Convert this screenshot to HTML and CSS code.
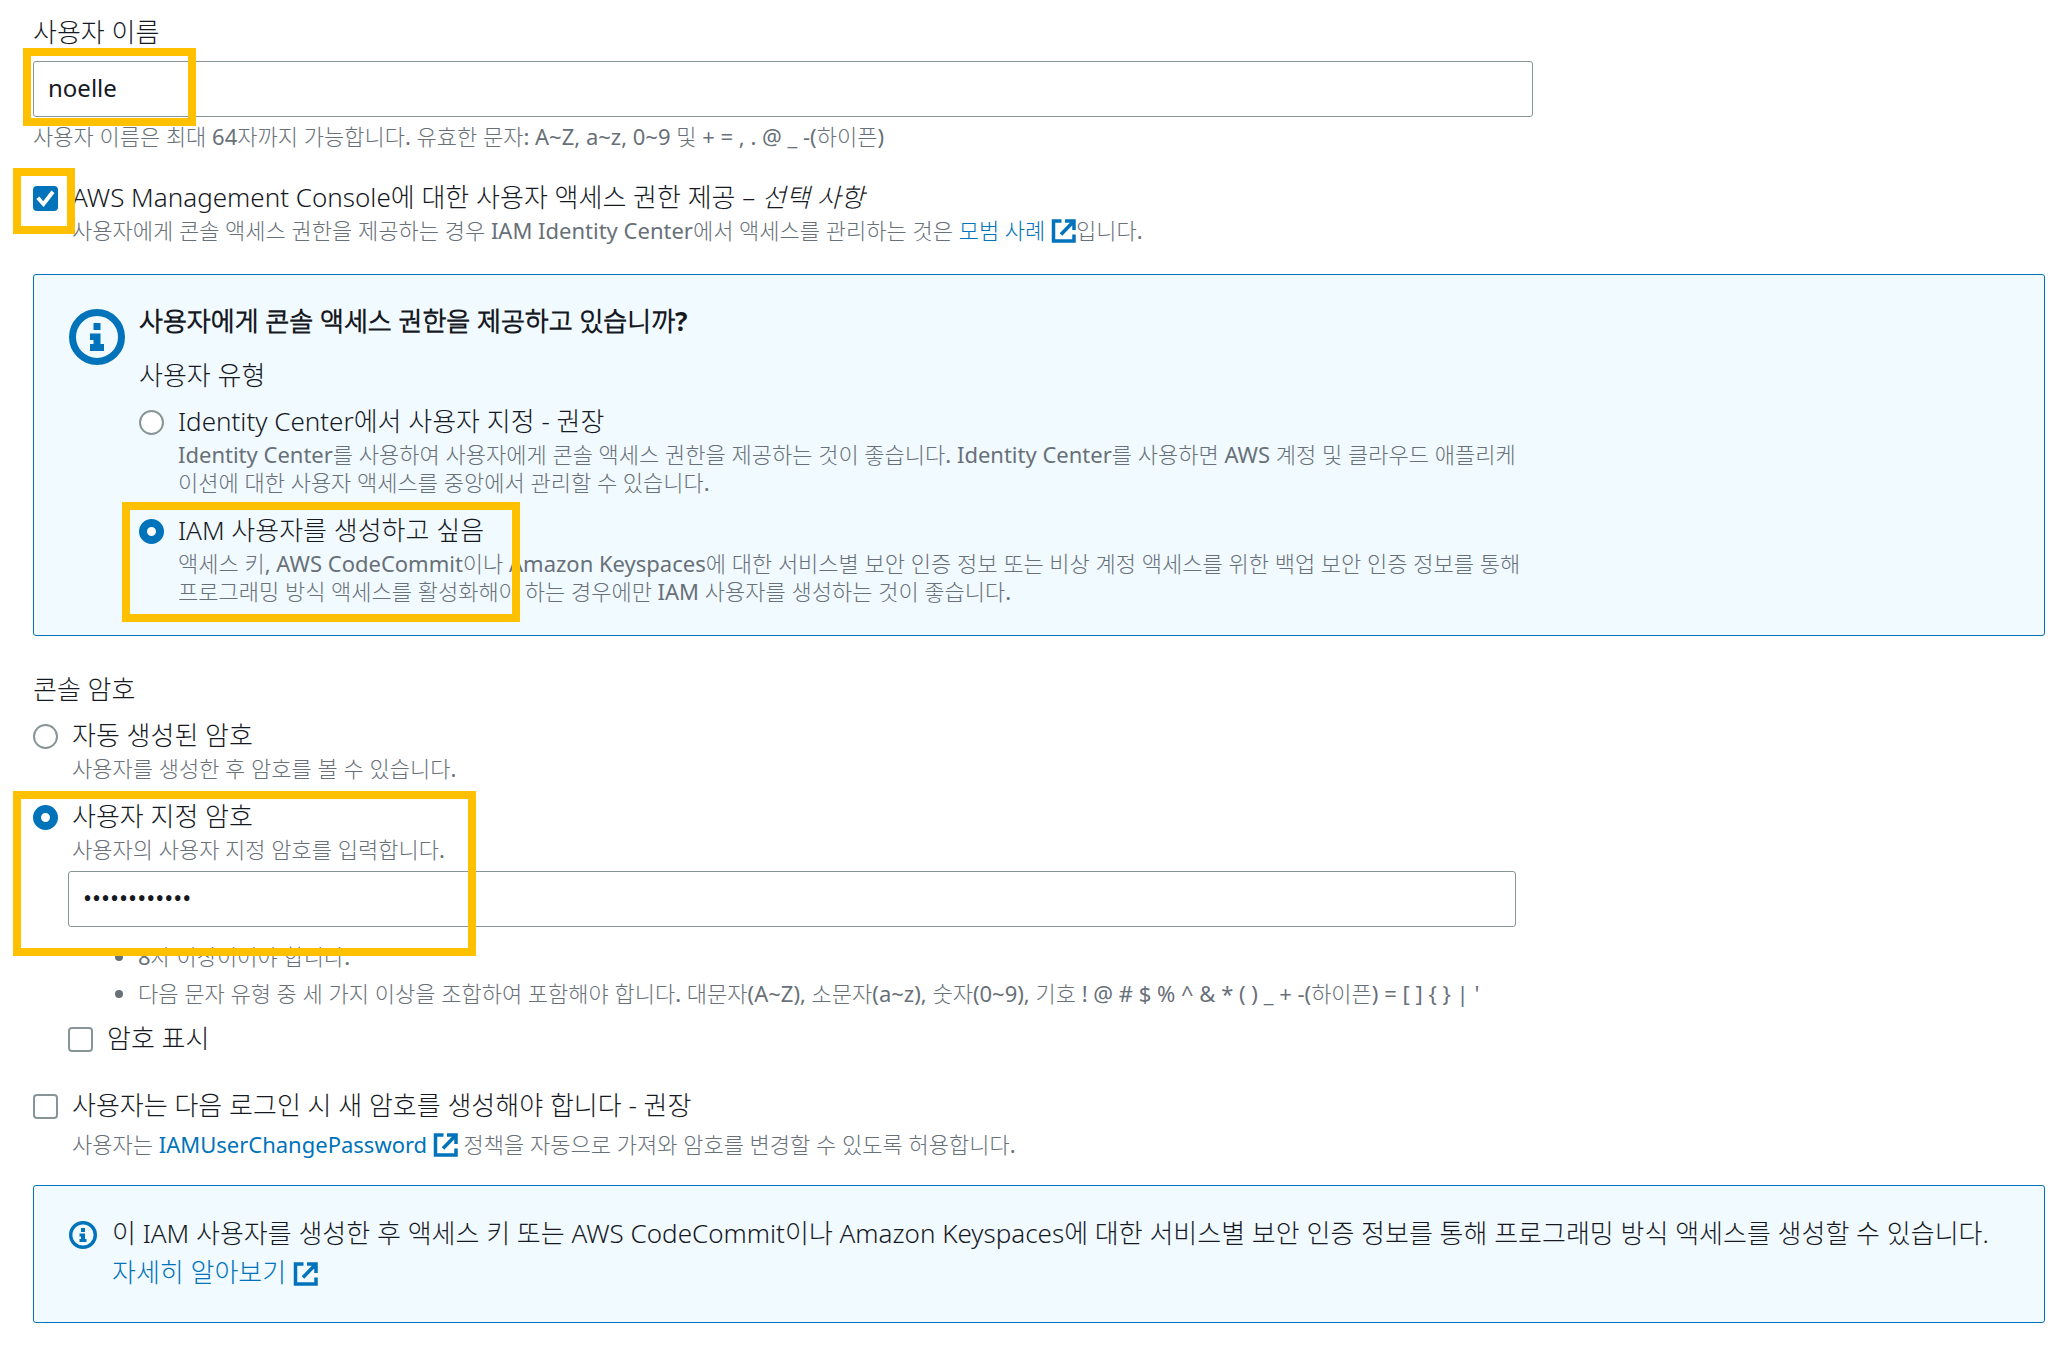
FILE: index.html
```html
<!DOCTYPE html>
<html lang="ko">
<head>
    <meta charset="UTF-8">
    <title>사용자 생성</title>
    <link rel="stylesheet" href="styles.css">
</head>
<body>
    <svg class="sprite" aria-hidden="true">
        <symbol id="external" viewBox="0 0 24 24">
            <path d="M10 2H2v20h20.500V15.500M13.500 2h9v9M22 2.500 9.500 15.500" fill="none" stroke="currentColor" stroke-width="3.500"/>
        </symbol>
        <symbol id="info" viewBox="0 0 56 56">
            <circle cx="28" cy="28" r="24.500" fill="none" stroke="currentColor" stroke-width="7"/>
            <path d="M24.500 14h7v7h-7zM21 24.500h10.500V35H35v7H21v-7h3.500v-4H21z" fill="currentColor"/>
        </symbol>
        <symbol id="info-small" viewBox="0 0 28 28">
            <circle cx="14" cy="14" r="12.300" fill="none" stroke="currentColor" stroke-width="3.400"/>
            <path d="M12 7h4v4h-4zM10.500 12.500H16V18h1.500v3h-7v-3H12v-2.500h-1.500z" fill="currentColor"/>
        </symbol>
    </svg>

    <form class="page">
        <div class="field">
            <label class="label" for="username">사용자 이름</label>
            <div class="marked">
                <input class="text-input" type="text" id="username" name="username" value="noelle">
                <span class="mark mark-name"></span>
            </div>
            <p class="desc hint">사용자 이름은 최대 64자까지 가능합니다. 유효한 문자: A~Z, a~z, 0~9 및 + = , . @ _ -(하이픈)</p>
        </div>

        <div class="choice console-access">
            <input type="checkbox" id="console" checked>
            <div>
                <label class="label" for="console">AWS Management Console에 대한 사용자 액세스 권한 제공 – <em>선택 사항</em></label>
                <p class="desc">사용자에게 콘솔 액세스 권한을 제공하는 경우 IAM Identity Center에서 액세스를 관리하는 것은 <a href="#">모범 사례 <svg class="external"><use href="#external"/></svg></a>입니다.</p>
            </div>
            <span class="mark mark-check"></span>
        </div>

        <section class="alert">
            <svg class="icon-big"><use href="#info"/></svg>
            <div class="alert-body">
                <h2>사용자에게 콘솔 액세스 권한을 제공하고 있습니까?</h2>
                <fieldset class="user-type">
                    <legend class="label">사용자 유형</legend>
                    <div class="choices">
                        <div class="choice">
                            <input type="radio" id="type-center" name="type">
                            <div>
                                <label class="label" for="type-center">Identity Center에서 사용자 지정 - 권장</label>
                                <p class="desc">Identity Center를 사용하여 사용자에게 콘솔 액세스 권한을 제공하는 것이 좋습니다. Identity Center를 사용하면 AWS 계정 및 클라우드 애플리케이션에 대한 사용자 액세스를 중앙에서 관리할 수 있습니다.</p>
                            </div>
                        </div>
                        <div class="choice">
                            <input type="radio" id="type-iam" name="type" checked>
                            <div>
                                <label class="label" for="type-iam">IAM 사용자를 생성하고 싶음</label>
                                <p class="desc">액세스 키, AWS CodeCommit이나 Amazon Keyspaces에 대한 서비스별 보안 인증 정보 또는 비상 계정 액세스를 위한 백업 보안 인증 정보를 통해 프로그래밍 방식 액세스를 활성화해야 하는 경우에만 IAM 사용자를 생성하는 것이 좋습니다.</p>
                            </div>
                            <span class="mark mark-iam"></span>
                        </div>
                    </div>
                </fieldset>
            </div>
        </section>

        <fieldset class="password">
            <legend class="label">콘솔 암호</legend>
            <div class="choices">
                <div class="choice">
                    <input type="radio" id="pw-auto" name="pw">
                    <div>
                        <label class="label" for="pw-auto">자동 생성된 암호</label>
                        <p class="desc">사용자를 생성한 후 암호를 볼 수 있습니다.</p>
                    </div>
                </div>
                <div class="choice">
                    <input type="radio" id="pw-custom" name="pw" checked>
                    <div>
                        <label class="label" for="pw-custom">사용자 지정 암호</label>
                        <p class="desc">사용자의 사용자 지정 암호를 입력합니다.</p>
                    </div>
                    <span class="mark mark-password"></span>
                </div>
            </div>
            <div class="custom">
                <input class="text-input" type="password" value="noelle123456" aria-label="사용자 지정 암호">
                <ul class="desc rules">
                    <li>8자 이상이어야 합니다.</li>
                    <li>다음 문자 유형 중 세 가지 이상을 조합하여 포함해야 합니다. 대문자(A~Z), 소문자(a~z), 숫자(0~9), 기호 ! @ # $ % ^ &amp; * ( ) _ + -(하이픈) = [ ] { } | '</li>
                </ul>
                <div class="choice">
                    <input type="checkbox" id="show">
                    <label class="label" for="show">암호 표시</label>
                </div>
            </div>
        </fieldset>

        <div class="choice reset">
            <input type="checkbox" id="reset">
            <div>
                <label class="label" for="reset">사용자는 다음 로그인 시 새 암호를 생성해야 합니다 - 권장</label>
                <p class="desc">사용자는 <a href="#">IAMUserChangePassword <svg class="external"><use href="#external"/></svg></a> 정책을 자동으로 가져와 암호를 변경할 수 있도록 허용합니다.</p>
            </div>
        </div>

        <section class="alert note">
            <svg class="icon-small"><use href="#info-small"/></svg>
            <p>이 IAM 사용자를 생성한 후 액세스 키 또는 AWS CodeCommit이나 Amazon Keyspaces에 대한 서비스별 보안 인증 정보를 통해 프로그래밍 방식 액세스를 생성할 수 있습니다. <a href="#">자세히 알아보기 <svg class="external"><use href="#external"/></svg></a></p>
        </section>
    </form>
</body>
</html>
```
FILE: styles.css
```css
* {
    box-sizing: border-box;
}

body {
    margin: 0;
    background: #fff;
    color: #16191f;
    font-family: "Noto Sans", "Noto Sans CJK KR Light", "Noto Sans CJK KR", sans-serif;
    font-size: 26px;
    font-weight: 300;
    line-height: 36px;
}

p, h2, ul, fieldset, legend {
    margin: 0;
    padding: 0;
}

fieldset {
    border: 0;
    min-width: 0;
}

a {
    color: #0073bb;
    text-decoration: none;
}

.sprite {
    display: none;
}

.page {
    padding: 14px 18px 28px 33px;
}

.label {
    display: block;
}

.desc {
    color: #687078;
    font-size: 22px;
    font-weight: 400;
    line-height: 28px;
}

.field {
    max-width: 1500px;
}

.marked {
    position: relative;
    margin-top: 11px;
}

.text-input {
    display: block;
    width: 100%;
    height: 56px;
    padding: 0 14px 3px;
    border: 1px solid #879596;
    border-radius: 3px;
    background: #fff;
    color: #16191f;
    font-family: inherit;
    font-size: 24px;
}

.hint {
    margin-top: 5px;
}

/* Radio and checkbox rows */
.choice {
    position: relative;
    display: grid;
    grid-template-columns: 25px 1fr;
    column-gap: 14px;
}

.choice .desc {
    margin-top: 1px;
}

.choices {
    display: grid;
    row-gap: 16px;
    margin-top: 10px;
}

input[type="radio"],
input[type="checkbox"] {
    appearance: none;
    width: 25px;
    height: 25px;
    margin: 7px 0 0;
    border: 2px solid #879596;
    border-radius: 4px;
    background: #fff;
}

input[type="radio"] {
    border-radius: 50%;
}

input[type="radio"]:checked {
    border: 8px solid #0073bb;
}

input[type="checkbox"]:checked {
    border-color: #0073bb;
    background: #0073bb;
}

input[type="checkbox"]:checked::before {
    content: "";
    display: block;
    height: 21px;
    background: #fff;
    clip-path: polygon(6% 52%, 21% 41%, 39% 63%, 78% 12%, 93% 24%, 41% 90%);
}

.console-access {
    margin-top: 29px;
}

.external {
    width: 25px;
    height: 24px;
    vertical-align: -4px;
}

.alert {
    display: flex;
    gap: 14px;
    margin-top: 30px;
    padding: 28px 35px 30px;
    border: 1px solid #0073bb;
    border-radius: 3px;
    background: #f1faff;
}

.icon-big {
    flex: none;
    width: 56px;
    height: 56px;
    margin-top: 6px;
    color: #0073bb;
}

.alert-body {
    max-width: 1382px;
}

h2 {
    font-size: 26px;
    font-weight: 700;
}

.user-type {
    margin-top: 18px;
}

.password {
    margin-top: 35px;
}

.custom {
    max-width: 1483px;
    margin-top: 8px;
    padding-left: 35px;
}

.rules {
    display: grid;
    row-gap: 9px;
    margin: 15px 0 13px;
    padding-left: 70px;
}

.reset {
    margin-top: 31px;
}

.reset .desc {
    margin-top: 7px;
}

.note {
    gap: 15px;
    margin-top: 27px;
    line-height: 39px;
}

.icon-small {
    flex: none;
    width: 28px;
    height: 28px;
    margin-top: 7px;
    color: #0073bb;
}

/* Yellow frames over the fields to fill in */
.mark {
    position: absolute;
    border: 8px solid #ffc000;
    pointer-events: none;
}

.mark-name {
    top: -13px;
    left: -10px;
    width: 173px;
    height: 78px;
}

.mark-check {
    top: -11px;
    left: -20px;
    width: 62px;
    height: 66px;
}

.mark-iam {
    top: -10px;
    left: -17px;
    width: 398px;
    height: 120px;
}

.mark-password {
    top: -7px;
    left: -20px;
    width: 463px;
    height: 165px;
}
```
